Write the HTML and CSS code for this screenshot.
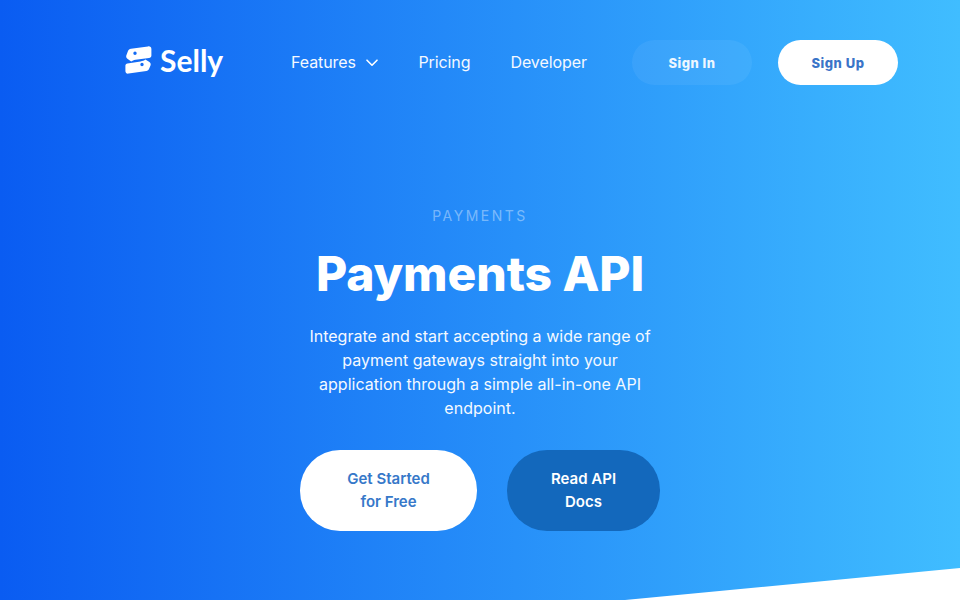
FILE: index.html
```html
<!DOCTYPE html>
<html lang="en">
<head>
<meta charset="utf-8">
<title>Selly - Payments API</title>
<link rel="stylesheet" href="styles.css">
</head>
<body>
<div class="page">
  <header class="header">
    <a class="brand" href="#">
      <svg class="brand-icon" viewBox="0 0 27 28" width="27" height="28" aria-hidden="true">
        <path fill-rule="evenodd" fill="#fff" d="M6 2.8 L23 0.4 C25 0.1 26.4 1.2 26.4 3 L26.4 9.4 C26.4 10.8 25.4 11.8 24 12 L10.5 13.8 C8.6 14.1 7.4 14.6 6.2 15.6 L2.4 12.8 C1.2 11.9 1 10.8 1.3 9.6 L2.9 5.2 C3.4 3.8 4.6 3 6 2.8 Z M10 5.6 A1.7 1.7 0 1 0 10 9 A1.7 1.7 0 1 0 10 5.6 Z"/>
        <path fill-rule="evenodd" fill="#fff" d="M2.4 17.4 L15.6 15.4 C17.6 15.1 19.2 14.6 20.4 13.6 L24.4 16 C25.6 16.8 26 18 25.6 19.2 L24 23 C23.5 24.2 22.6 24.8 21.4 25 L3.6 27.6 C1.6 27.9 0.4 26.8 0.4 25 L0.4 19.6 C0.4 18.4 1.2 17.6 2.4 17.4 Z M17 16.8 A1.7 1.7 0 1 0 17 20.2 A1.7 1.7 0 1 0 17 16.8 Z"/>
      </svg>
      <span class="brand-name">Selly</span>
    </a>
    <nav class="nav">
      <a class="nav-link" href="#">Features
        <svg class="chevron" viewBox="0 0 12 8" width="12" height="8" aria-hidden="true"><path d="M1 1.2 L6 6.2 L11 1.2" fill="none" stroke="#fff" stroke-width="1.6" stroke-linecap="round" stroke-linejoin="round"/></svg>
      </a>
      <a class="nav-link" href="#">Pricing</a>
      <a class="nav-link" href="#">Developer</a>
    </nav>
    <div class="auth">
      <a class="auth-btn auth-ghost" href="#">Sign In</a>
      <a class="auth-btn auth-solid" href="#">Sign Up</a>
    </div>
  </header>
  <main class="hero">
    <p class="eyebrow">PAYMENTS</p>
    <h1 class="title">Payments API</h1>
    <p class="lead">Integrate and start accepting a wide range of payment gateways straight into your application through a simple all-in-one API endpoint.</p>
    <div class="actions">
      <a class="cta cta-white" href="#">Get Started<br>for Free</a>
      <a class="cta cta-dark" href="#">Read API<br>Docs</a>
    </div>
  </main>
  <svg class="slant" viewBox="0 0 335 32" width="335" height="32" aria-hidden="true"><polygon points="0,32 335,0 335,32" fill="#fff"/></svg>
</div>
</body>
</html>
```
FILE: styles.css
```css
* { box-sizing: border-box; }
html, body { margin: 0; padding: 0; }
body { font-family: "Inter", "Liberation Sans", sans-serif; color: #fff; }
a { color: inherit; text-decoration: none; }
.page {
  position: relative;
  width: 960px;
  height: 600px;
  overflow: hidden;
  padding-top: 40px;
  background: linear-gradient(90deg, #0a5cf2 0%, #40bdff 100%);
}
.header {
  display: flex;
  align-items: center;
  height: 45px;
  padding: 0 62px 0 125px;
}
.brand { display: flex; align-items: center; gap: 8px; width: 166px; margin-top: -6px; }
.brand-icon { display: block; }
.brand-name { font-family: "Lato", sans-serif; font-weight: 700; font-size: 30px; line-height: 1; }
.nav { display: flex; align-items: center; gap: 40px; font-size: 16px; margin-top: -2px; letter-spacing: -0.08px; }
.nav-link { display: flex; align-items: center; gap: 10.5px; line-height: 24px; color: #f4f9ff; }
.chevron { display: block; margin-top: 2px; }
.auth { display: flex; gap: 26px; margin-left: auto; }
.auth-btn {
  display: flex; align-items: center; justify-content: center;
  width: 120px; height: 45px; border-radius: 23px;
  font-size: 13px; font-weight: 800; letter-spacing: 0.5px;
  padding-top: 1px;
}
.auth-ghost { background: rgba(255,255,255,0.06); color: #eef7ff; }
.auth-solid { background: #fff; color: #3a74c8; }
.hero {
  display: flex; flex-direction: column; align-items: center;
  text-align: center;
  padding-top: 122px;
}
.eyebrow { margin: 0; font-size: 14px; line-height: 17px; letter-spacing: 2.5px; color: rgba(255,255,255,0.4); }
.title { margin: 21px 0 0; font-size: 48px; line-height: 58px; font-weight: 800; letter-spacing: -0.1px; }
.lead { margin: 21px 0 0; width: 360px; font-size: 16px; line-height: 24px; letter-spacing: 0.02px; color: #f4f9ff; }
.actions { display: flex; gap: 30px; margin-top: 30px; }
.cta {
  display: block; height: 81px; padding: 17px 0; border-radius: 40px;
  font-size: 15px; font-weight: 600; line-height: 23px; text-align: center;
}
.cta-white { width: 177px; background: #fff; color: #3678c9; }
.cta-dark { width: 153px; background: #1368bc; color: #fff; }
.slant { position: absolute; right: 0; bottom: 0; display: block; }
```
